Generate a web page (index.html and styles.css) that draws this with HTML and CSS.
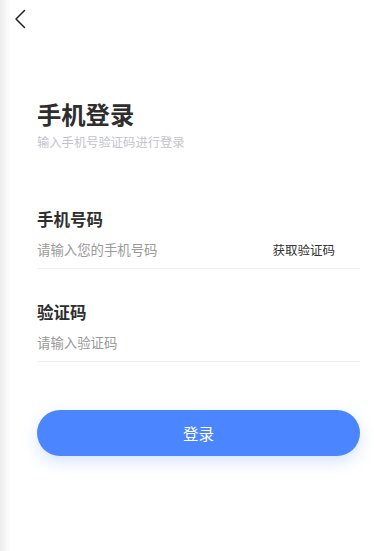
FILE: index.html
```html
<!DOCTYPE html>
<html lang="zh-CN">
<head>
<meta charset="utf-8">
<title>手机登录</title>
<link rel="stylesheet" href="styles.css">
</head>
<body>
<div class="page">
  <div class="edge"></div>
  <header class="header">
    <svg class="back" width="14" height="20" viewBox="0 0 14 20" fill="none">
      <path d="M11.5 1.5 L3 10 L11.5 18.5" stroke="#222" stroke-width="1.5" stroke-linecap="round" stroke-linejoin="round"/>
    </svg>
  </header>
  <main class="content">
    <h1 class="title">手机登录</h1>
    <p class="subtitle">输入手机号验证码进行登录</p>

    <div class="field first">
      <div class="label">手机号码</div>
      <div class="input-row">
        <span class="placeholder">请输入您的手机号码</span>
        <span class="code-btn">获取验证码</span>
      </div>
    </div>

    <div class="field">
      <div class="label">验证码</div>
      <div class="input-row">
        <span class="placeholder">请输入验证码</span>
      </div>
    </div>

    <button class="login">登录</button>
  </main>
</div>
</body>
</html>
```

FILE: styles.css
```css
html, body {
  margin: 0;
  padding: 0;
  background: #fff;
}
body {
  font-family: "Noto Sans CJK SC", "Noto Sans", sans-serif;
  color: #333;
}
.page {
  position: relative;
  width: 374px;
  height: 551px;
  overflow: hidden;
  background: #fff;
}
.edge {
  position: absolute;
  left: 0;
  top: 0;
  bottom: 0;
  width: 10px;
  background: linear-gradient(to right, #ececec, rgba(255,255,255,0));
}
.header {
  height: 40px;
  display: flex;
  align-items: flex-start;
  padding: 9px 0 0 13px;
  box-sizing: border-box;
}
.back {
  display: block;
}
.content {
  padding: 0 14px 0 37px;
  margin-top: 59px;
}
.title {
  margin: 0;
  font-size: 24.3px;
  line-height: 30px;
  font-weight: 700;
  color: #2e2e2e;
}
.subtitle {
  margin: 5px 0 0;
  font-size: 12.3px;
  line-height: 16px;
  color: #c3c3cf;
}
.field {
  margin-top: 32px;
}
.field.first {
  margin-top: 58px;
}
.label {
  font-size: 16.5px;
  line-height: 22px;
  font-weight: 700;
  color: #2e2e2e;
}
.input-row {
  margin-top: 9px;
  display: flex;
  justify-content: space-between;
  align-items: center;
  height: 20px;
  padding-bottom: 9px;
  border-bottom: 1px solid #f0f0f0;
}
.placeholder {
  font-size: 13.4px;
  color: #9a9a9a;
}
.code-btn {
  font-size: 12.5px;
  color: #333;
  margin-right: 25px;
}
.login {
  display: block;
  width: 100%;
  height: 46px;
  margin-top: 48px;
  border: none;
  border-radius: 23px;
  background: #4b85ff;
  color: #fff;
  font-family: inherit;
  font-size: 15.5px;
  box-shadow: 0 6px 16px rgba(75, 133, 255, 0.22);
}
```
